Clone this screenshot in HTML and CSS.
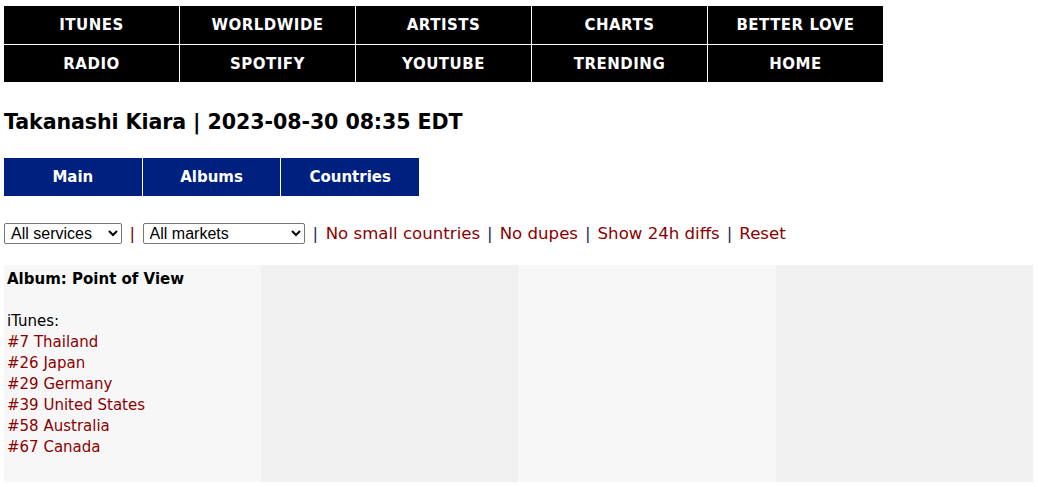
FILE: index.html
```html
<!DOCTYPE html>
<html>
<head>
<meta charset="utf-8">
<link rel="stylesheet" href="styles.css">
</head>
<body>
<nav class="topnav">
  <div class="navrow">
    <a class="navcell">ITUNES</a>
    <a class="navcell">WORLDWIDE</a>
    <a class="navcell">ARTISTS</a>
    <a class="navcell">CHARTS</a>
    <a class="navcell">BETTER LOVE</a>
  </div>
  <div class="navrow">
    <a class="navcell">RADIO</a>
    <a class="navcell">SPOTIFY</a>
    <a class="navcell">YOUTUBE</a>
    <a class="navcell">TRENDING</a>
    <a class="navcell">HOME</a>
  </div>
</nav>
<h1 class="title">Takanashi Kiara | 2023-08-30 08:35 EDT</h1>
<div class="tabs">
  <a class="tab">Main</a>
  <a class="tab">Albums</a>
  <a class="tab">Countries</a>
</div>
<div class="filters">
  <select class="sel sel-services"><option>All services</option></select>
  <span class="sep sep-red">|</span>
  <select class="sel sel-markets"><option>All markets</option></select>
  <span class="sep sep-first">|</span>
  <a class="flink">No small countries</a>
  <span class="sep">|</span>
  <a class="flink">No dupes</a>
  <span class="sep">|</span>
  <a class="flink">Show 24h diffs</a>
  <span class="sep">|</span>
  <a class="flink">Reset</a>
</div>
<div class="grid">
  <div class="col light">
    <div class="album">Album: Point of View</div>
    <div class="service">iTunes:</div>
    <a class="entry">#7 Thailand</a>
    <a class="entry">#26 Japan</a>
    <a class="entry">#29 Germany</a>
    <a class="entry">#39 United States</a>
    <a class="entry">#58 Australia</a>
    <a class="entry">#67 Canada</a>
  </div>
  <div class="col dark"></div>
  <div class="col light"></div>
  <div class="col dark"></div>
</div>
</body>
</html>
```

FILE: styles.css
```css
html, body {
  margin: 0;
  padding: 0;
  background: #fff;
}
body {
  padding: 6px 5px 0 4px;
  font-family: "DejaVu Sans", Verdana, sans-serif;
  color: #000;
}
.topnav {
  display: flex;
  flex-direction: column;
  gap: 1px;
  width: 879px;
}
.navrow {
  display: flex;
  gap: 1px;
}
.navrow:first-child .navcell { height: 38px; }
.navrow:last-child .navcell { height: 37px; }
.navcell {
  flex: 1 1 0;
  background: #000;
  color: #fff;
  font-weight: bold;
  font-size: 15px;
  display: flex;
  align-items: center;
  justify-content: center;
  letter-spacing: 0.5px;
}
.title {
  margin: 26px 0 0 0;
  font-size: 20.6px;
  line-height: 28px;
  font-weight: bold;
  letter-spacing: -0.1px;
}
.tabs {
  display: flex;
  gap: 1px;
  margin-top: 22px;
  width: 415px;
}
.tab {
  flex: 1 1 0;
  height: 38px;
  background: #00207f;
  color: #fff;
  font-weight: bold;
  font-size: 15px;
  display: flex;
  align-items: center;
  justify-content: center;
}
.filters {
  display: flex;
  align-items: center;
  margin-top: 26px;
  height: 22px;
  font-size: 16.6px;
  white-space: pre;
}
.sel {
  height: 21px;
  font-family: "Liberation Sans", Arial, sans-serif;
  font-size: 16px;
  border: 1px solid #767676;
  border-radius: 2px;
  background: #fff;
  color: #000;
  padding: 0 0 0 2px;
}
.sel-services { width: 118px; }
.sel-markets { width: 162px; }
.sep {
  color: #1c2a6a;
  margin: 0 7px 0 7px;
}
.sep-first {
  margin: 0 7.5px 0 8px;
}
.sep-red {
  color: #7a0010;
  margin: 0 7.5px 0 7.5px;
}
.flink {
  color: #8b0000;
}
.grid {
  display: grid;
  grid-template-columns: 257px 257px 258px 257px;
  margin-top: 21px;
  height: 217px;
}
.col.light { background: #f7f7f7; }
.col.dark { background: #f0f0f0; }
.col {
  padding: 4px 3px;
  display: flex;
  flex-direction: column;
  font-size: 15px;
  line-height: 21px;
}
.album {
  font-weight: bold;
  font-size: 15px;
  line-height: 21px;
  margin-bottom: 21px;
}
.service {
  color: #000;
}
.entry {
  color: #8b0000;
}
```
